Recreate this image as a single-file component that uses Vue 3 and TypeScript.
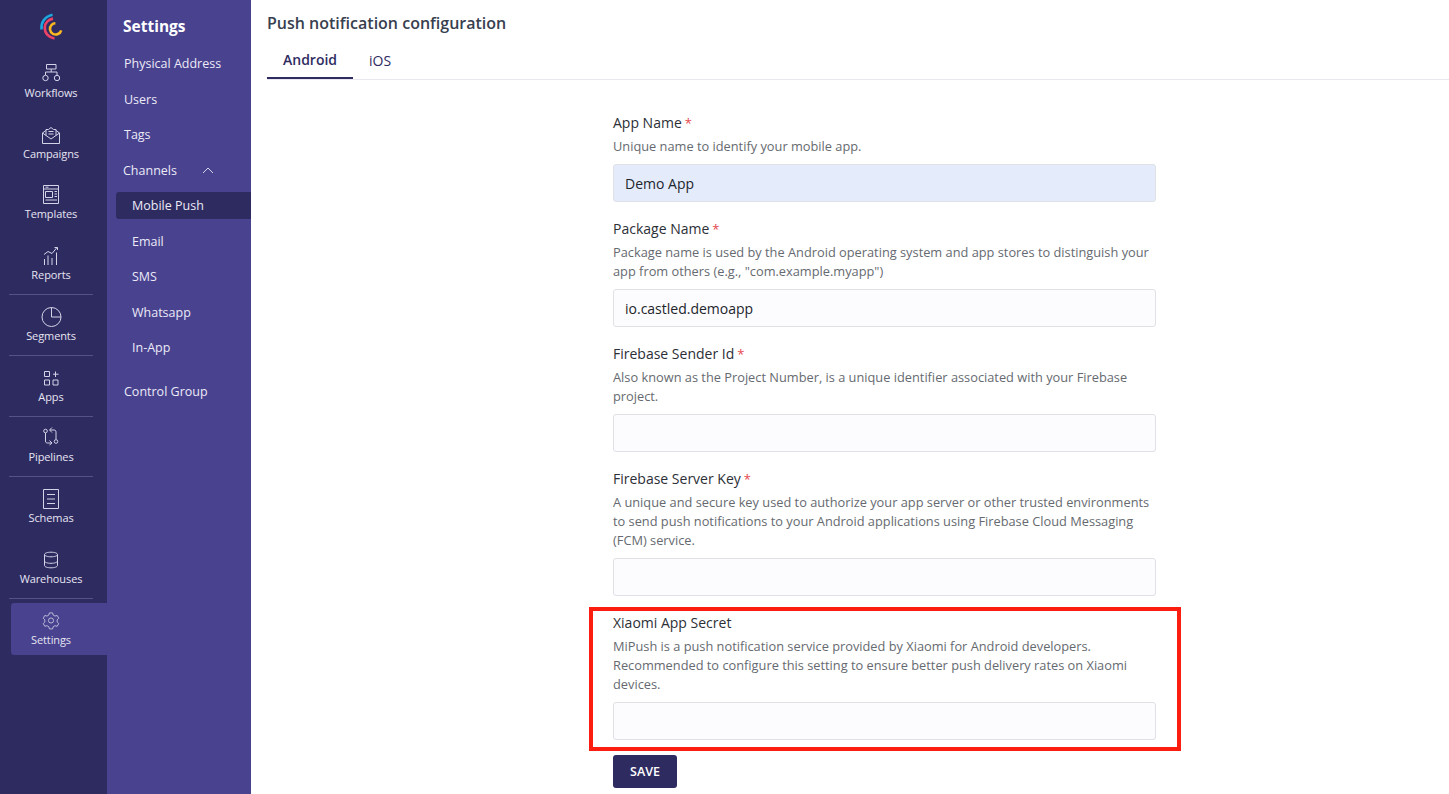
<template>
  <div class="page">
    <nav class="rail">
      <div class="logo">
        <svg width="34" height="30" viewBox="0 0 34 30" fill="none">
          <path d="M7.6 16.5C6.6 10 10.5 3.5 18.5 1.8" stroke="#1ea7dc" stroke-width="2.6" />
          <path d="M20.5 25.5C14.5 24.6 10.4 20 10.8 14.2C11.1 9.8 14.4 6.4 19 5.6" stroke="#ee4266" stroke-width="2.6" />
          <path d="M27.2 17.4C26.2 21 22.2 22.4 19 20.8C15.6 19 15 14.4 17.6 11.8C18.6 10.8 19.8 10.3 21.4 10.2" stroke="#fbb91f" stroke-width="2.6" />
        </svg>
      </div>
      <template v-for="item in railItems" :key="item.label">
        <a class="rail-item" :class="{ active: item.label === 'Settings' }">
          <svg class="rail-icon" width="24" height="24" viewBox="0 0 24 24" fill="none" stroke="currentColor" stroke-width="1">
            <g :transform="item.transform">
              <path v-for="d in item.paths" :key="d" :d="d" />
              <circle v-for="c in item.circles" :key="c.join()" :cx="c[0]" :cy="c[1]" :r="c[2]" />
            </g>
          </svg>
          <span>{{ item.label }}</span>
        </a>
        <hr v-if="item.divider" class="rail-line" />
      </template>
    </nav>

    <aside class="subnav">
      <h3>Settings</h3>
      <ul>
        <li>Physical Address</li>
        <li>Users</li>
        <li>Tags</li>
        <li class="channels">
          Channels
          <svg width="12" height="7" viewBox="0 0 12 7" fill="none" stroke="#d8d6ee" stroke-width="1"><path d="M1 6l5-5 5 5" /></svg>
        </li>
        <li v-for="c in channels" :key="c" class="child" :class="{ active: c === 'Mobile Push' }">{{ c }}</li>
        <li class="last">Control Group</li>
      </ul>
    </aside>

    <main class="content">
      <h2>Push notification configuration</h2>
      <div class="tabs">
        <button class="tab active">Android</button>
        <button class="tab">iOS</button>
      </div>
      <form class="form" @submit.prevent>
        <div v-for="f in fields" :key="f.label" class="field">
          <label>{{ f.label }}<span v-if="f.required" class="req">*</span></label>
          <p>
            <template v-for="line in f.help" :key="line">{{ line }}<br /></template>
          </p>
          <input :class="{ filled: f.label === 'App Name' }" :value="f.value" type="text" />
        </div>
        <button class="save">SAVE</button>
        <div class="callout"></div>
      </form>
    </main>
  </div>
</template>

<script setup lang="ts">
interface RailItem {
  label: string;
  paths: string[];
  circles?: number[][];
  divider?: boolean;
  transform?: string;
}

interface Field {
  label: string;
  required: boolean;
  help: string[];
  value?: string;
}

const railItems: RailItem[] = [
  {
    label: 'Workflows',
    paths: ['M7.5 4.5h9.500v4.500H7.500z', 'M12.200 9v3', 'M6.500 15v-3h11.500v3'],
    circles: [[6.5, 18, 2.7], [18, 18, 2.7]],
  },
  {
    label: 'Campaigns',
    paths: [
      'M3.500 12v10.500h17V12',
      'M3.500 12l8.500 6 8.500-6',
      'M3.500 12l3.500-2.500M20.500 12L17 9.500',
      'M7 14.500V8.500h2.500L12 6.500l2.500 2H17v6',
      'M9.500 10.500h5M9.500 13h5',
    ],
  },
  {
    label: 'Templates',
    paths: [
      'M4.500 4.500h15v18h-15z',
      'M4.500 8h15',
      'M6.500 6.200h3',
      'M6.500 10.500h7v6h-7z',
      'M15.500 10.500h2.500M15.500 13h2.500M15.500 15.500h2.500M6.500 19h11.500',
    ],
  },
  {
    label: 'Reports',
    paths: [
      'M5.500 23v-6M9 23v-9.500M13 23v-7M17.500 23V10.500',
      'M5 12.500l4-3 4 2 5-6',
      'M15.500 5.500h3V8',
    ],
    divider: true,
  },
  {
    label: 'Segments',
    paths: ['M12.500 4.500V14H22'],
    circles: [[12.5, 14, 9.5]],
    divider: true,
  },
  {
    label: 'Apps',
    paths: [
      'M5.500 7.500h5v5h-5z',
      'M5.500 16h5v5h-5z',
      'M14 16h5v5h-5z',
      'M16.500 7.500v5.500M14 10.200h5.500',
    ],
    divider: true,
  },
  {
    label: 'Pipelines',
    paths: [
      'M6.500 9v8c0 1.500.8 2 2 2h4M10.500 16.500L13 19l-2.500 2',
      'M17 15.500V8c0-1.500-.8-2-2-2h-4M13 3.500L10.500 6 13 8.500',
    ],
    circles: [[6.5, 7, 1.8], [17, 17.5, 1.8]],
    divider: true,
  },
  {
    label: 'Schemas',
    paths: ['M4.500 4.500h15v19h-15z', 'M8 9.500h8M8 14h8M8 18.500h8'],
  },
  {
    label: 'Warehouses',
    paths: [
      'M5.500 8.500v11c0 1.400 3 2.300 6.500 2.300s6.500-.9 6.500-2.300v-11',
      'M5.500 8.500c0-1.400 3-2.300 6.500-2.300s6.500.9 6.500 2.300-3 2.300-6.500 2.300-6.500-.9-6.500-2.300z',
      'M5.500 15c0 1.400 3 2.300 6.500 2.300s6.500-.9 6.500-2.300',
    ],
    divider: true,
  },
  {
    label: 'Settings',
    paths: [
      'M10 2.500h4l.7 2.700 2.300 1.300 2.700-.8 2 3.500-2 1.900v2.800l2 1.900-2 3.500-2.700-.8-2.300 1.300-.7 2.700h-4l-.7-2.700-2.300-1.300-2.700.8-2-3.500 2-1.900v-2.800l-2-1.900 2-3.500 2.700.8 2.300-1.300z',
    ],
    circles: [[12, 12, 3.2]],
    transform: 'translate(2.4 3.9) scale(.8)',
  },
];

const channels = ['Mobile Push', 'Email', 'SMS', 'Whatsapp', 'In-App'];

const fields: Field[] = [
  {
    label: 'App Name',
    required: true,
    help: ['Unique name to identify your mobile app.'],
    value: 'Demo App',
  },
  {
    label: 'Package Name',
    required: true,
    help: [
      'Package name is used by the Android operating system and app stores to distinguish your',
      'app from others (e.g., "com.example.myapp")',
    ],
    value: 'io.castled.demoapp',
  },
  {
    label: 'Firebase Sender Id',
    required: true,
    help: [
      'Also known as the Project Number, is a unique identifier associated with your Firebase',
      'project.',
    ],
  },
  {
    label: 'Firebase Server Key',
    required: true,
    help: [
      'A unique and secure key used to authorize your app server or other trusted environments',
      'to send push notifications to your Android applications using Firebase Cloud Messaging',
      '(FCM) service.',
    ],
  },
  {
    label: 'Xiaomi App Secret',
    required: false,
    help: [
      'MiPush is a push notification service provided by Xiaomi for Android developers.',
      'Recommended to configure this setting to ensure better push delivery rates on Xiaomi',
      'devices.',
    ],
  },
];
</script>

<style scoped>
.page {
  display: flex;
  height: 794px;
  overflow: hidden;
  font-family: "Open Sans", "Noto Sans", sans-serif;
  background: #fff;
}

.rail {
  width: 107px;
  flex-shrink: 0;
  background: #2e2b61;
  color: #e6e5f2;
  display: flex;
  flex-direction: column;
  box-sizing: border-box;
  padding: 13px 0 0 9px;
}

.logo {
  height: 30px;
  width: 84px;
  display: flex;
  justify-content: center;
  margin-bottom: 16.800px;
}

.rail-item {
  width: 84px;
  height: 48px;
  margin-bottom: 12.750px;
  display: flex;
  flex-direction: column;
  align-items: center;
  font-size: 11px;
  line-height: 16px;
  letter-spacing: -0.1px;
}

.rail-item.active {
  margin-top: -4px;
  margin-left: 2px;
  width: 96px;
  height: 52px;
  padding: 4px 16px 0 0;
  box-sizing: border-box;
  background: #48428f;
  border-radius: 3px 0 0 3px;
}

.rail-icon {
  color: #d5d3e8;
  margin-bottom: 1px;
  flex-shrink: 0;
}

.rail-line {
  width: 84px;
  height: 0;
  margin: -8.750px 0 7.750px;
  border: none;
  border-top: 1px solid #55528a;
}

.subnav {
  width: 144px;
  flex-shrink: 0;
  background: #48428f;
  color: #eceaf7;
  box-sizing: border-box;
  padding-top: 15px;
}

.subnav h3 {
  margin: 0 0 13px 16px;
  font-size: 15.500px;
  line-height: 22px;
  font-weight: 700;
  color: #fff;
}

.subnav ul {
  list-style: none;
  margin: 0;
  padding: 0;
}

.subnav li {
  height: 27px;
  margin-bottom: 8.500px;
  padding-left: 17px;
  font-size: 12.500px;
  line-height: 27px;
  box-sizing: border-box;
}

.subnav li.channels {
  padding-left: 16px;
  position: relative;
}

.channels svg {
  position: absolute;
  left: 95px;
  top: 10px;
}

.subnav li.child {
  margin-left: 9px;
  padding-left: 16px;
}

.subnav li.child.active {
  background: #2e2b61;
  border-radius: 3px 0 0 3px;
}

.subnav li.last {
  margin-top: 17px;
}

.content {
  flex: 1;
  min-width: 0;
  padding: 0 0 0 16px;
}

.content h2 {
  margin: 0;
  padding-top: 12px;
  font-size: 16px;
  line-height: 22px;
  font-weight: 600;
  color: #38404f;
}

.tabs {
  display: flex;
  height: 46px;
  box-sizing: border-box;
  border-bottom: 1px solid #e8e8ee;
}

.tab {
  border: none;
  background: none;
  padding: 7px 16px 0;
  height: 45px;
  font: inherit;
  font-size: 14px;
  color: #2e2b61;
}

.tab.active {
  font-weight: 600;
  border-bottom: 2px solid #2e2b61;
}

.form {
  position: relative;
  width: 543px;
  margin: 33px 0 0 346px;
}

.field {
  margin-bottom: 17.500px;
}

.field label {
  display: block;
  font-size: 14px;
  line-height: 20px;
  color: #2c2f36;
}

.req {
  margin-left: 3px;
  font-size: 13px;
  color: #e5484d;
}

.field p {
  margin: 4px 0 8px;
  font-size: 12.800px;
  line-height: 19px;
  color: #666a70;
}

.field input {
  display: block;
  width: 100%;
  height: 37.500px;
  box-sizing: border-box;
  padding: 1px 11px 0;
  font: inherit;
  font-size: 14px;
  color: #22252b;
  background: #fcfcfe;
  border: 1px solid #dfe1e6;
  border-radius: 3px;
  outline: none;
}

.field input.filled {
  background: #e4ecfb;
}

.save {
  display: block;
  width: 64px;
  height: 33px;
  margin-top: -2px;
  border: none;
  border-radius: 3px;
  background: #2e2b61;
  color: #fff;
  font: inherit;
  font-size: 12.500px;
  font-weight: 600;
}

.callout {
  position: absolute;
  left: -24px;
  top: 494px;
  width: 592px;
  height: 144px;
  box-sizing: border-box;
  border: 4px solid #fb1d10;
  pointer-events: none;
}
</style>
